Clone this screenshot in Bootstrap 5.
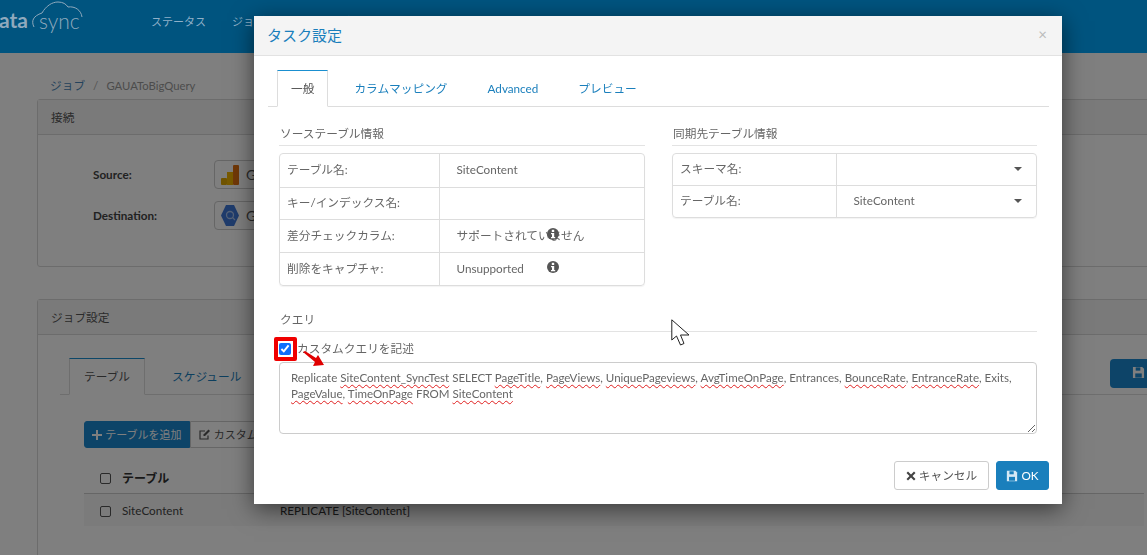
<!DOCTYPE html>
<html lang="ja">
<head>
  <meta charset="UTF-8">
  <title>タスク設定</title>
  <link href="https://cdn.jsdelivr.net/npm/bootstrap@5.3.3/dist/css/bootstrap.min.css" rel="stylesheet">
  <style>
    html, body { height: 555px; overflow: hidden; }
    body { font-family: Lato, "Noto Sans CJK JP", sans-serif; font-size: 11.7px; color: #666; background: #fff; position: relative; }
    svg { display: inline-block; vertical-align: -1px; }

    /* top bar sits above the backdrop, colours are the dimmed ones */
    .top-bar { height: 53px; background: #00547f; position: relative; z-index: 1051; padding: 0; flex-wrap: nowrap; justify-content: flex-start; overflow: hidden; }
    .brand-box { width: 151px; flex: none; position: relative; height: 53px; color: #8fa9bd; }
    .brand-data { position: absolute; left: -13px; top: 5px; font-size: 21px; font-weight: 700; line-height: 30px; }
    .brand-sync { position: absolute; left: 39px; top: 6px; font-size: 21px; font-weight: 300; line-height: 30px; }
    .brand-box svg { position: absolute; left: 0; top: 0; }
    .top-link { color: #8fb0c8; font-size: 11px; text-decoration: none; margin-right: 26px; white-space: nowrap; line-height: 16px; position: relative; top: -5px; }

    .page-wrap { padding: 24px 0 0 37px; margin-right: -60px; }
    .crumbs { padding-left: 13px; height: 22px; line-height: 16px; color: #999; }
    .crumbs .crumb-link { color: #4a86b8; }
    .crumbs .crumb-sep { margin: 0 8px; color: #aaa; }
    .crumbs .crumb-name { font-size: 11.3px; }
    .panel-box { border: 1px solid #d9d9d9; border-radius: 3px; background: #fff; }
    .panel-head { height: 35px; line-height: 35px; padding-left: 13px; background: #f5f5f5; border-bottom: 1px solid #d9d9d9; color: #555; }
    .panel-conn { height: 168px; margin-bottom: 32px; }
    .conn-rows { padding: 25px 0 0 55px; }
    .conn-row { display: flex; align-items: center; margin-bottom: 12px; height: 29px; }
    .conn-row label { width: 121px; font-weight: 700; color: #444; }
    .conn-pick { width: 300px; height: 29px; border: 1px solid #ccc; border-radius: 4px; display: flex; align-items: center; padding-left: 6px; gap: 7px; font-size: 14px; color: #555; }
    .panel-job { height: 400px; }

    .tab-strip { --bs-nav-tabs-border-color: #ddd; border-bottom: 1px solid #ddd; padding-left: 9px; flex-wrap: nowrap; }
    .tab-strip .nav-link { padding: 10px 13px; line-height: 15px; font-size: 11.7px; color: #1a7fbc; border: 1px solid transparent; border-radius: 0; margin-right: 12px; }
    .tab-strip .nav-link.active { color: #555; background: #fff; border-color: #ddd #ddd #fff; border-top-color: #1a8fd0; }
    .job-tabs-row { margin: 23px 0 0 22px; position: relative; }
    .job-tabs-row .nav-link { padding: 10px 14px; }
    .job-save { position: absolute; right: 14px; top: 1px; width: 82px; height: 29px; padding: 0 0 0 22px; text-align: left; background: #1a88d0; border: 0; border-radius: 4px; color: #fff; }
    .job-actions { margin: 26px 0 0 46px; height: 27px; }
    .job-actions .btn { font-size: 11px; padding: 0 8px; height: 27px; line-height: 25px; border-radius: 3px 0 0 3px; }
    .btn-add { background: #1a88d0; color: #fff; border: 1px solid #1a88d0; width: 106px; padding: 0 !important; }
    .btn-custom { background: #fff; color: #555; border: 1px solid #ccc; border-radius: 0 3px 3px 0 !important; }
    .job-table { margin: 0 0 0 46px; width: 1060px; --bs-table-bg: transparent; color: #444; font-size: 11.7px; }
    .job-table th { height: 45px; vertical-align: middle; padding: 17px 0 0 0; border-bottom: 1px solid #ccc; color: #333; font-size: 12px; }
    .job-table td { height: 33px; vertical-align: middle; padding: 3px 0 0; background: #f6f6f6; border: 0; }
    .job-table td:last-child { color: #333; }
    .box-tick { width: 11px; height: 11px; border: 1px solid #555; border-radius: 2px; display: block; margin-left: 16px; }

    /* dialog */
    .task-dialog { position: absolute; left: 254px; top: 16px; width: 808px; height: 488px; z-index: 1060; background: #fff; border: 0; border-radius: 0; box-shadow: 0 5px 22px rgba(0,0,0,.55); display: flex; flex-direction: column; }
    .task-head { height: 40px; background: #f4f4f4; border-bottom: 1px solid #e2e2e2; padding: 0 14px 2px 13px; border-radius: 0; }
    .task-head h5 { font-size: 15px; font-weight: 400; color: #1a7fbc; margin: 0; }
    .task-close { color: #bbb; font-size: 15px; line-height: 1; position: relative; right: 1px; }
    .task-body { padding: 14px 13px 0 14px; flex: 1; }
    .pane-wrap { padding: 0 12px 0 11px; }
    .sect-title { font-size: 11.7px; line-height: 16px; font-weight: 400; color: #666; padding: 0 0 4px 1px; margin: 0 0 7px; border-bottom: 1px solid #e3e3e3; }
    .info-col { width: 366px; flex: none; }
    .info-box { border: 1px solid #ddd; border-radius: 4px; overflow: hidden; box-shadow: 0 1px 1px rgba(0,0,0,.05); }
    .info-table { margin: 0; color: #666; font-size: 11.7px; --bs-table-bg: transparent; }
    .info-table td { padding: 0 0 0 7px; vertical-align: middle; border-bottom: 1px solid #ddd; position: relative; }
    .info-table tr:last-child td { border-bottom: 0; }
    .info-table td + td { border-left: 1px solid #ddd; padding-left: 17px; }
    .left-rows td:first-child { width: 159px; }
    .right-rows td:first-child { width: 163px; }
    .info-mark { position: absolute; left: 106px; top: 50%; margin-top: -9px; line-height: 0; }
    .drop-caret { position: absolute; right: 14px; top: 50%; margin-top: -2px; width: 0; height: 0; border: 4px solid transparent; border-top-color: #555; border-bottom: 0; }
    .query-sect { margin-top: 25px; }
    .query-sect .sect-title { margin-bottom: 9px; }
    .check-line { height: 16px; position: relative; display: flex; align-items: center; gap: 6px; }
    .check-line input { width: 12px; height: 12px; margin: 0; accent-color: #0d6efd; }
    .red-frame { position: absolute; left: -5px; top: -4px; width: 23px; height: 24px; border: 4px solid #f00000; border-radius: 2px; }
    .red-arrow { position: absolute; left: 24px; top: 10px; z-index: 2; }
    .query-box { margin-top: 5px; height: 72px; padding: 7px 11px; font-size: 11.55px; line-height: 16px; color: #666; border: 1px solid #ccc; border-radius: 4px; resize: both; overflow: auto; }
    .query-box u { text-decoration: underline wavy #e02020 1px; text-underline-offset: 2px; text-decoration-skip-ink: none; }
    .task-foot { display: flex; justify-content: flex-end; gap: 7px; padding: 0 13px 14px 0; }
    .task-foot .btn { font-size: 11.7px; height: 29px; padding: 0; border-radius: 3px; display: flex; align-items: center; justify-content: center; gap: 3px; }
    .btn-cancel { width: 95px; background: #fff; border: 1px solid #ccc; color: #555; }
    .btn-ok { width: 53px; background: #1a7fbc; border: 1px solid #1a7fbc; color: #fff; }
    .mouse-arrow { position: absolute; left: 671px; top: 319px; z-index: 1070; }
  </style>
</head>
<body>
  <nav class="navbar top-bar">
    <div class="brand-box">
      <span class="brand-data">data</span>
      <span class="brand-sync">sync</span>
      <svg width="90" height="40" viewBox="0 0 90 40"><path d="M34 27 C31 21 33 16 42 13 C46 6 52 2 58 2 C63 2 66 4 68 7 C75 6 81 10 82 17" fill="none" stroke="#8fa9bd" stroke-width="1"/></svg>
    </div>
    <a class="top-link">ステータス</a>
    <a class="top-link">ジョブ</a>
    <a class="top-link">接続</a>
    <a class="top-link">データ</a>
    <a class="top-link">設定</a>
  </nav>

  <div class="page-wrap">
    <div class="crumbs"><span class="crumb-link">ジョブ</span><span class="crumb-sep">/</span><span class="crumb-name">GAUAToBigQuery</span></div>
    <div class="panel-box panel-conn">
      <div class="panel-head">接続</div>
      <div class="conn-rows">
        <div class="conn-row">
          <label>Source:</label>
          <div class="conn-pick">
            <svg width="18" height="20" viewBox="0 0 18 20"><rect x="0" y="13" width="6" height="7" rx="1" fill="#e0a800"/><rect x="6" y="7" width="6" height="13" fill="#f0b400"/><rect x="12" y="0" width="6" height="20" rx="1" fill="#e07010"/></svg>
            <span>Google Analytics</span>
          </div>
        </div>
        <div class="conn-row">
          <label>Destination:</label>
          <div class="conn-pick">
            <svg width="18" height="21" viewBox="0 0 18 21"><polygon points="5,0 13,0 18,10.5 13,21 5,21 0,10.5" fill="#3f78d8"/><circle cx="9" cy="10" r="3.5" fill="none" stroke="#a9c4ee" stroke-width="1.3"/><path d="M11.5 12.5 L14 15" stroke="#a9c4ee" stroke-width="1.3"/></svg>
            <span>Google BigQuery</span>
          </div>
        </div>
      </div>
    </div>

    <div class="panel-box panel-job">
      <div class="panel-head">ジョブ設定</div>
      <div class="job-tabs-row">
        <ul class="nav nav-tabs tab-strip">
          <li class="nav-item"><a class="nav-link active">テーブル</a></li>
          <li class="nav-item"><a class="nav-link">スケジュール</a></li>
          <li class="nav-item"><a class="nav-link">イベント</a></li>
        </ul>
        <button class="job-save" type="button"><svg width="13" height="13" viewBox="0 0 14 14"><path fill="#fff" d="M1 1h10l2 2v10H1z"/><rect x="4" y="1.5" width="5" height="3.5" fill="#1a88d0"/><rect x="3.5" y="8" width="7" height="4.5" fill="#1a88d0"/></svg></button>
      </div>
      <div class="job-actions d-flex">
        <button class="btn btn-add" type="button"><svg width="10" height="10" viewBox="0 0 10 10"><path fill="#fff" d="M4 0h2v4h4v2H6v4H4V6H0V4h4z"/></svg> テーブルを追加</button>
        <button class="btn btn-custom" type="button"><svg width="12" height="11" viewBox="0 0 12 11"><path fill="none" stroke="#555" stroke-width="1.2" d="M9 6.5V10H1V2h5"/><path fill="#555" d="M4.5 5.5 9.5.5l1.5 1.5-5 5H4.5z"/></svg> カスタムクエリを追加</button>
      </div>
      <table class="table job-table">
        <thead>
          <tr><th style="width:38px"><span class="box-tick"></span></th><th style="width:158px">テーブル</th><th></th></tr>
        </thead>
        <tbody>
          <tr><td><span class="box-tick"></span></td><td>SiteContent</td><td>REPLICATE [SiteContent]</td></tr>
        </tbody>
      </table>
    </div>
  </div>

  <div class="modal-backdrop show"></div>

  <div class="modal-content task-dialog">
    <div class="modal-header task-head">
      <h5>タスク設定</h5>
      <span class="task-close ms-auto">&times;</span>
    </div>
    <div class="task-body">
      <ul class="nav nav-tabs tab-strip">
        <li class="nav-item"><a class="nav-link active">一般</a></li>
        <li class="nav-item"><a class="nav-link">カラムマッピング</a></li>
        <li class="nav-item"><a class="nav-link">Advanced</a></li>
        <li class="nav-item"><a class="nav-link">プレビュー</a></li>
      </ul>
      <div class="pane-wrap">
        <div class="d-flex justify-content-between" style="margin-top:18px">
          <div class="info-col">
            <h6 class="sect-title">ソーステーブル情報</h6>
            <div class="info-box">
              <table class="table info-table left-rows">
                <tr style="height:33px"><td>テーブル名:</td><td>SiteContent</td></tr>
                <tr style="height:32px"><td>キー/インデックス名:</td><td></td></tr>
                <tr style="height:33px"><td>差分チェックカラム:</td><td>サポートされていません<span class="info-mark"><svg width="14" height="14" viewBox="0 0 14 14"><circle cx="7" cy="7" r="6" fill="#555"/><rect x="5.8" y="2.8" width="2.4" height="2.2" fill="#fff"/><path fill="#fff" d="M5 6h3.2v4H9.2v1.2H5V10h1V7.2H5z"/></svg></span></td></tr>
                <tr style="height:33px"><td>削除をキャプチャ:</td><td>Unsupported<span class="info-mark"><svg width="14" height="14" viewBox="0 0 14 14"><circle cx="7" cy="7" r="6" fill="#555"/><rect x="5.8" y="2.8" width="2.4" height="2.2" fill="#fff"/><path fill="#fff" d="M5 6h3.2v4H9.2v1.2H5V10h1V7.2H5z"/></svg></span></td></tr>
              </table>
            </div>
          </div>
          <div class="info-col" style="width:365px">
            <h6 class="sect-title">同期先テーブル情報</h6>
            <div class="info-box">
              <table class="table info-table right-rows">
                <tr style="height:31px"><td>スキーマ名:</td><td><span class="drop-caret"></span></td></tr>
                <tr style="height:32px"><td>テーブル名:</td><td>SiteContent<span class="drop-caret"></span></td></tr>
              </table>
            </div>
          </div>
        </div>

        <div class="query-sect">
          <h6 class="sect-title">クエリ</h6>
          <div class="check-line">
            <input type="checkbox" checked>
            <label>カスタムクエリを記述</label>
            <span class="red-frame"></span>
            <svg class="red-arrow" width="22" height="18" viewBox="0 0 22 18"><path fill="#e00000" d="M0 1 L2 0 L13 7 L15 4 L21 14 L10 15 L12 11 Z"/></svg>
          </div>
          <div class="query-box form-control">Replicate <u>SiteContent_SyncTest</u> SELECT <u>PageTitle</u>, <u>PageViews</u>, <u>UniquePageviews</u>, <u>AvgTimeOnPage</u>, Entrances, <u>BounceRate</u>, <u>EntranceRate</u>, Exits, <u>PageValue</u>, <u>TimeOnPage</u> FROM <u>SiteContent</u></div>
        </div>
      </div>
    </div>
    <div class="task-foot">
      <button class="btn btn-cancel" type="button"><svg width="10" height="10" viewBox="0 0 10 10"><path fill="#444" d="M2 .5 5 3.500 8 .5 9.500 2 6.500 5 9.500 8 8 9.500 5 6.500 2 9.500.5 8 3.500 5 .5 2z"/></svg> キャンセル</button>
      <button class="btn btn-ok" type="button"><svg width="12" height="12" viewBox="0 0 14 14"><path fill="#d5e8f5" d="M1 1h10l2 2v10H1z"/><rect x="4" y="1.500" width="5" height="3.500" fill="#1a7fbc"/><rect x="3.500" y="8" width="7" height="4.500" fill="#1a7fbc"/></svg>OK</button>
    </div>
  </div>

  <svg class="mouse-arrow" width="20" height="28" viewBox="0 0 20 28"><path fill="#fff" stroke="#222" stroke-width="1" d="M.8.8V21L5.500 17 9.500 26 13 24.500 9.500 16H18z"/></svg>

  <script src="https://cdn.jsdelivr.net/npm/bootstrap@5.3.3/dist/js/bootstrap.bundle.min.js"></script>
</body>
</html>
